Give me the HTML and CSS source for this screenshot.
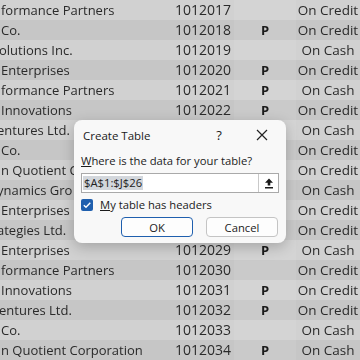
FILE: index.html
```html
<!DOCTYPE html>
<html lang="en">
<head>
    <meta charset="UTF-8">
    <meta name="viewport" content="width=device-width, initial-scale=1.0">
    <title>Create Table</title>
    <link rel="stylesheet" href="styles.css">
</head>
<body>
    <div class="sheet">
        <div class="row"><div class="name">formance Partners</div><div class="num">1012017</div><div class="flag"></div><div class="status">On Credit</div></div>
        <div class="row"><div class="name">Co.</div><div class="num">1012018</div><div class="flag">P</div><div class="status">On Credit</div></div>
        <div class="row"><div class="name cut">olutions Inc.</div><div class="num">1012019</div><div class="flag"></div><div class="status">On Cash</div></div>
        <div class="row"><div class="name">Enterprises</div><div class="num">1012020</div><div class="flag">P</div><div class="status">On Credit</div></div>
        <div class="row"><div class="name">formance Partners</div><div class="num">1012021</div><div class="flag">P</div><div class="status">On Cash</div></div>
        <div class="row"><div class="name">Innovations</div><div class="num">1012022</div><div class="flag">P</div><div class="status">On Credit</div></div>
        <!-- rows 1012023 to 1012028 sit behind the dialog -->
        <div class="row"><div class="name cut"><span class="clip">entures Ltd.</span></div><div class="num"></div><div class="flag"></div><div class="status">On Cash</div></div>
        <div class="row"><div class="name"><span class="clip">Co.</span></div><div class="num"></div><div class="flag"></div><div class="status">On Credit</div></div>
        <div class="row"><div class="name"><span class="clip">n Quotient Co</span></div><div class="num"></div><div class="flag"></div><div class="status">On Credit</div></div>
        <div class="row"><div class="name cut"><span class="clip">ynamics Gro</span></div><div class="num"></div><div class="flag"></div><div class="status">On Cash</div></div>
        <div class="row"><div class="name"><span class="clip">Enterprises L</span></div><div class="num"></div><div class="flag"></div><div class="status">On Credit</div></div>
        <div class="row"><div class="name cut"><span class="clip">ategies Ltd.</span></div><div class="num"></div><div class="flag"></div><div class="status">On Credit</div></div>
        <div class="row"><div class="name">Enterprises</div><div class="num">1012029</div><div class="flag">P</div><div class="status">On Cash</div></div>
        <div class="row"><div class="name">formance Partners</div><div class="num">1012030</div><div class="flag"></div><div class="status">On Credit</div></div>
        <div class="row"><div class="name">Innovations</div><div class="num">1012031</div><div class="flag">P</div><div class="status">On Credit</div></div>
        <div class="row"><div class="name cut">entures Ltd.</div><div class="num">1012032</div><div class="flag">P</div><div class="status">On Credit</div></div>
        <div class="row"><div class="name">Co.</div><div class="num">1012033</div><div class="flag"></div><div class="status">On Cash</div></div>
        <div class="row"><div class="name">n Quotient Corporation</div><div class="num">1012034</div><div class="flag">P</div><div class="status">On Cash</div></div>
    </div>

    <div class="dialog">
        <div class="dialog-title">
            <span class="title-text">Create Table</span>
            <span class="help">?</span>
            <svg class="close" width="12" height="12" viewBox="0 0 12 12">
                <path d="M1 1 L11 11 M11 1 L1 11" stroke="#222" stroke-width="1.2" fill="none"/>
            </svg>
        </div>
        <div class="dialog-body">
            <label class="prompt"><u>W</u>here is the data for your table?</label>
            <div class="range-box">
                <span class="range-text"><span class="selected">$A$1:$J$26</span></span>
                <span class="range-btn">
                    <svg width="10" height="11" viewBox="0 0 10 11">
                        <path d="M5 0.5 L9 4.8 L6.3 4.8 L6.3 7.6 L3.7 7.6 L3.7 4.8 L1 4.8 Z" fill="#1a1a1a"/>
                        <rect x="1" y="9" width="8" height="1.5" fill="#1a1a1a"/>
                    </svg>
                </span>
            </div>
            <div class="check-row">
                <span class="checkbox">
                    <svg width="12" height="12" viewBox="0 0 12 12">
                        <path d="M2.8 6.2 L5 8.3 L9.3 3.8" stroke="#fff" stroke-width="1.4" fill="none"/>
                    </svg>
                </span>
                <span><u>M</u>y table has headers</span>
            </div>
            <div class="actions">
                <button class="btn primary">OK</button>
                <button class="btn">Cancel</button>
            </div>
        </div>
    </div>
</body>
</html>
```

FILE: styles.css
```css
* {
    margin: 0;
    padding: 0;
    box-sizing: border-box;
}

body {
    width: 360px;
    height: 360px;
    overflow: hidden;
    background: #cbcbcb;
    font-family: 'Open Sans', 'Noto Sans', sans-serif;
    position: relative;
}

.sheet {
    display: flex;
    flex-direction: column;
    filter: blur(0.35px);
}

.row {
    display: grid;
    grid-template-columns: 172px 62px 62px 64px;
    height: 20px;
    align-items: center;
    font-size: 13px;
    color: #2a2a2a;
    background: #d1d1d1;
}

.row:nth-child(even) {
    background: #c6c6c6;
}

.row > div {
    height: 20px;
    line-height: 20px;
    white-space: nowrap;
    overflow: hidden;
}

.name {
    padding-left: 1px;
}

.name.cut {
    text-indent: -2px;
}

/* text running under the dialog */
.clip {
    display: inline-block;
    max-width: 74px;
    overflow: hidden;
    vertical-align: top;
}

.num {
    font-size: 14px;
    padding-left: 3px;
}

.flag {
    text-align: center;
    font-weight: 700;
    color: #1c1c1c;
    background: rgba(255, 255, 255, 0.08);
}

.status {
    text-align: center;
    font-size: 13.5px;
}

.dialog {
    position: absolute;
    left: 74px;
    top: 120px;
    width: 212px;
    height: 123px;
    background: #f8f8f8;
    border-radius: 8px;
    box-shadow: 0 4px 14px rgba(0, 0, 0, 0.22);
    font-size: 11.25px;
    color: #1b1b1b;
}

.dialog-title {
    display: flex;
    align-items: center;
    height: 28px;
    padding: 2px 0 0 9px;
}

.title-text {
    flex: 1;
    font-size: 11.5px;
}

.help {
    font-size: 13px;
    width: 24px;
    text-align: center;
    margin-right: 25px;
}

.close {
    margin-right: 18px;
}

.dialog-body {
    padding: 5px 7px 0 7px;
    display: flex;
    flex-direction: column;
}

.prompt {
    height: 15px;
    line-height: 15px;
}

.range-box {
    margin-top: 5px;
    height: 20px;
    width: 198px;
    display: flex;
    border: 1px solid #a9a9a9;
    background: #fff;
}

.range-text {
    flex: 1;
    padding-left: 1px;
    display: flex;
    align-items: center;
}

.selected {
    background: #d3d7dc;
    color: #222;
    line-height: 14px;
    padding: 0 1px;
}

.range-btn {
    width: 20px;
    border-left: 1px solid #c9c9c9;
    display: flex;
    align-items: center;
    justify-content: center;
}

.check-row {
    margin-top: 5px;
    height: 13px;
    display: flex;
    align-items: center;
    gap: 7px;
}

.checkbox {
    width: 12px;
    height: 12px;
    border-radius: 2px;
    background: #1f5fae;
    display: flex;
}

.actions {
    margin-top: 6px;
    display: flex;
    justify-content: flex-end;
    gap: 13px;
    padding-right: 1px;
}

.btn {
    width: 72px;
    height: 20px;
    border: 1px solid #c4c4c4;
    border-radius: 4px;
    background: #fdfdfd;
    font-family: 'Open Sans', 'Noto Sans', sans-serif;
    font-size: 11.25px;
    color: #1b1b1b;
}

.btn.primary {
    border: 1.5px solid #1f5fae;
}
```
